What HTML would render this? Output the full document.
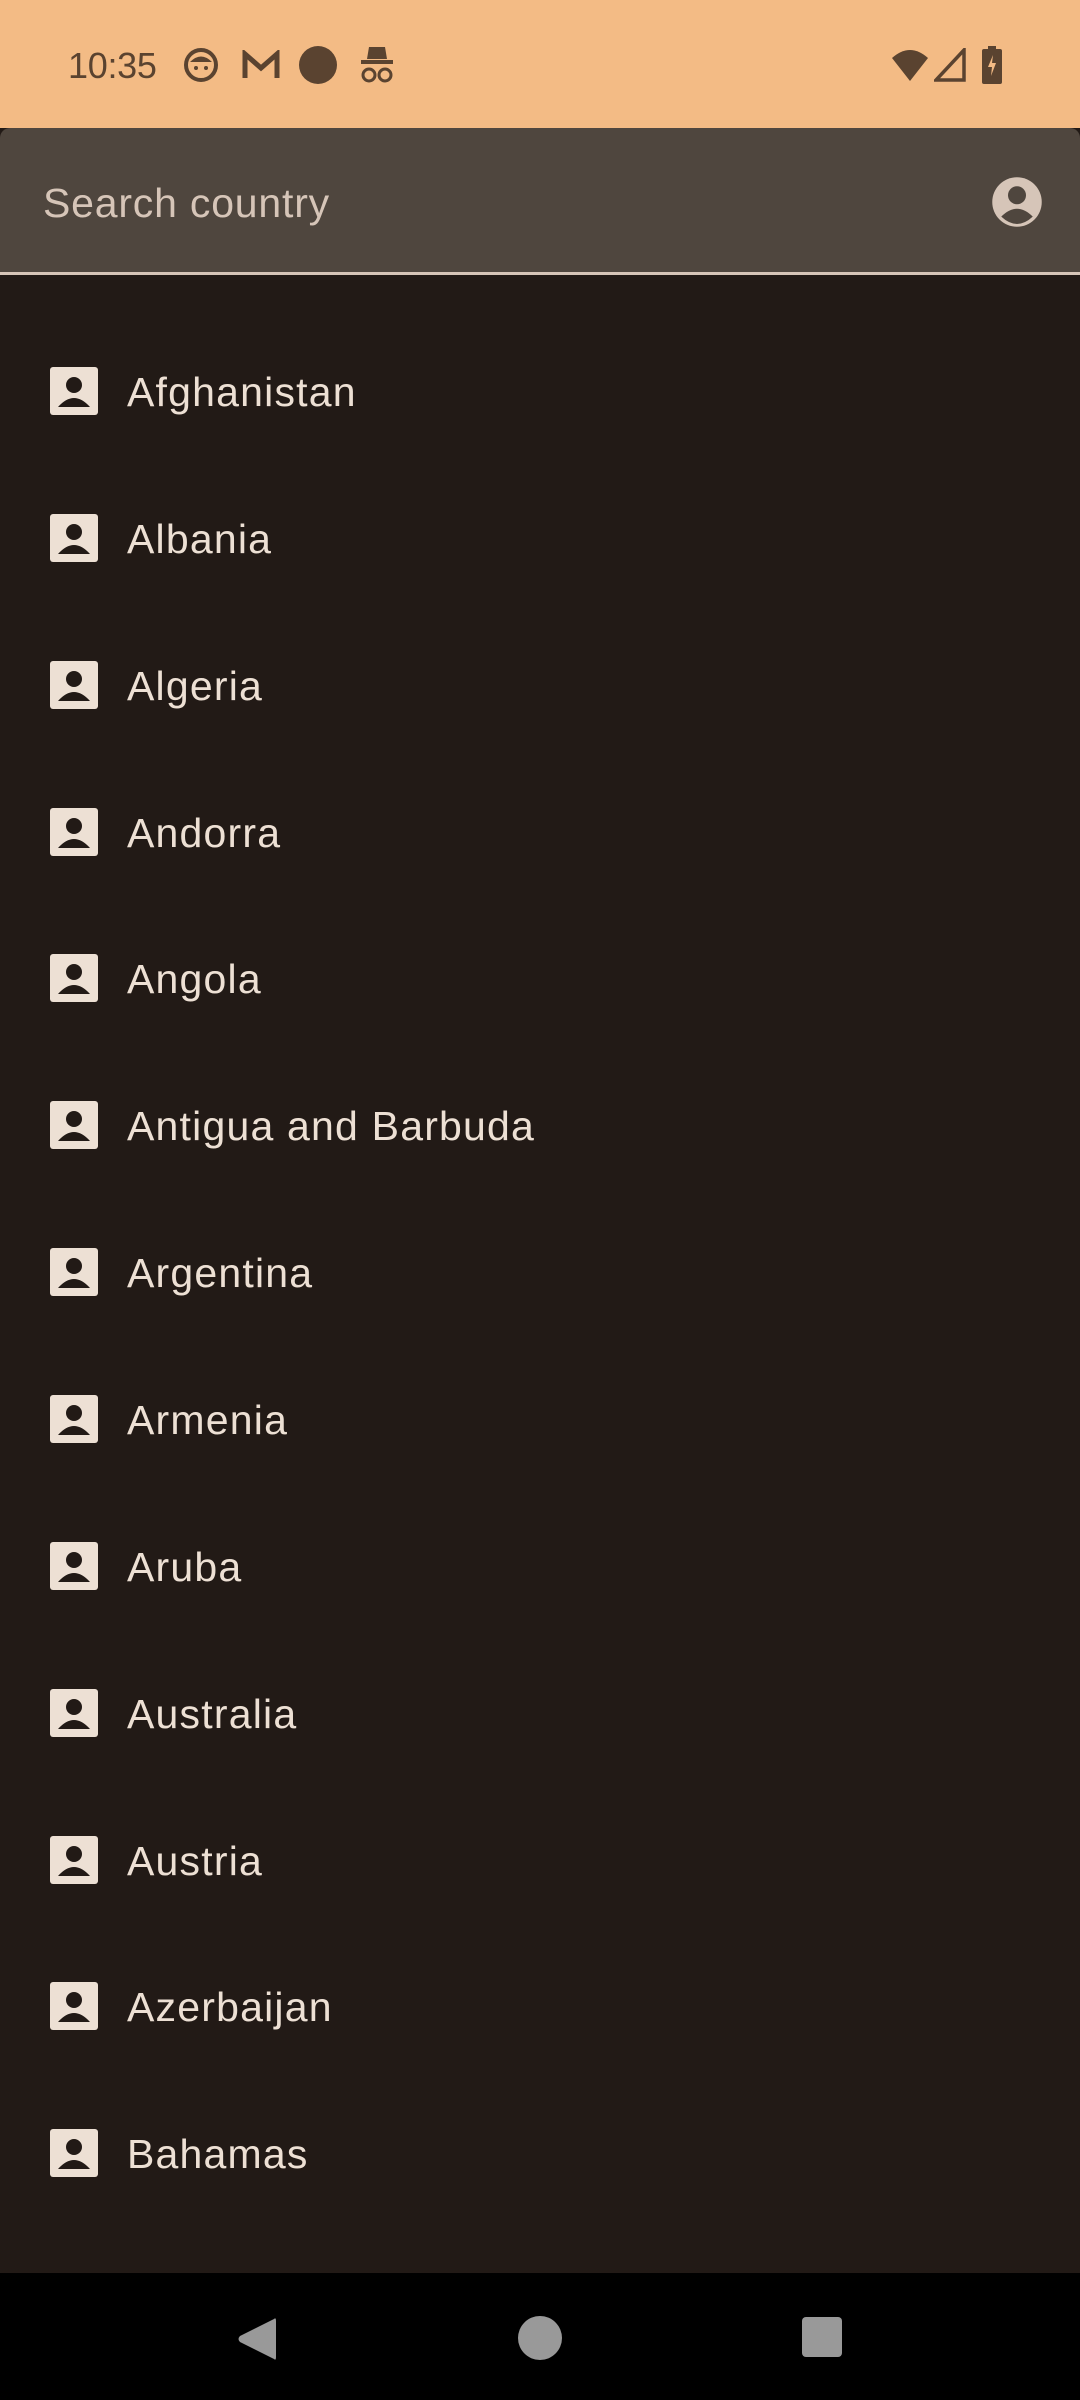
<!DOCTYPE html>
<html><head><meta charset="utf-8"><style>
*{margin:0;padding:0;box-sizing:border-box}
body{width:1080px;height:2400px;background:#221a16;font-family:"Liberation Sans",sans-serif;position:relative;overflow:hidden}
.sb{position:absolute;left:0;top:0;width:1080px;height:128px;background:#f3bb85}
.time{position:absolute;left:68px;top:45px;font-size:36px;color:#5a4330;letter-spacing:-0.3px}
.search{position:absolute;left:0;top:128px;width:1080px;height:144px;background:#4f463e;border-radius:10px 10px 0 0}
.search span{position:absolute;left:43px;top:52px;font-size:41px;color:#d6c5b8;letter-spacing:0.8px}
.div{position:absolute;left:0;top:272px;width:1080px;height:3px;background:#d6c5b8}
.item{position:absolute;left:0;width:1080px;height:60px}
.item svg{position:absolute;left:50px;top:6px}
.item span{position:absolute;left:127px;top:8px;font-size:41px;color:#ede0d4;letter-spacing:1.2px}
.nav{position:absolute;left:0;top:2273px;width:1080px;height:127px;background:#000}
</style></head><body>
<div class="sb">
<div class="time">10:35</div>
<svg style="position:absolute;left:183px;top:47px" width="36" height="36" viewBox="0 0 36 36"><circle cx="18" cy="18" r="15" fill="none" stroke="#5a4330" stroke-width="4"/><path d="M7 15 Q18 4 29 15" fill="#5a4330"/><circle cx="13" cy="21" r="2" fill="#5a4330"/><circle cx="23" cy="21" r="2" fill="#5a4330"/></svg>
<svg style="position:absolute;left:242px;top:50px" width="38" height="30" viewBox="0 0 38 30"><path d="M3 28V4L19 18 35 4V28" fill="none" stroke="#5a4330" stroke-width="5"/></svg>
<svg style="position:absolute;left:298px;top:45px" width="40" height="40"><circle cx="20" cy="20" r="19" fill="#5a4330"/></svg>
<svg style="position:absolute;left:357px;top:45px" width="40" height="40" viewBox="0 0 40 40"><path d="M12 2H28L30 14H10Z" fill="#5a4330"/><rect x="4" y="15" width="32" height="4" fill="#5a4330"/><circle cx="12" cy="30" r="6" fill="none" stroke="#5a4330" stroke-width="3"/><circle cx="28" cy="30" r="6" fill="none" stroke="#5a4330" stroke-width="3"/></svg>
<svg style="position:absolute;left:890px;top:48px" width="40" height="34" viewBox="0 0 40 34"><path d="M2 10 Q20 -6 38 10 L20 33Z" fill="#5a4330"/></svg>
<svg style="position:absolute;left:934px;top:48px" width="32" height="34" viewBox="0 0 32 34"><path d="M30 2V32H2Z" fill="none" stroke="#5a4330" stroke-width="3.5"/></svg>
<svg style="position:absolute;left:982px;top:46px" width="20" height="38" viewBox="0 0 20 38"><rect x="6" y="0" width="8" height="4" fill="#5a4330"/><rect x="0" y="3" width="20" height="35" rx="2" fill="#5a4330"/><path d="M11 9 6 21H10L9 30 14 17H10Z" fill="#f3bb85"/></svg>
</div>
<div class="search"><span>Search country</span>
<svg style="position:absolute;left:990px;top:47px" width="54" height="54" viewBox="0 0 24 24"><circle cx="12" cy="12" r="11" fill="#d6c5b8"/><circle cx="12" cy="9" r="4" fill="#4f463e"/><path d="M5 18.5 Q12 11.5 19 18.5 Q12 25 5 18.5Z" fill="#4f463e"/></svg>
</div>
<div class="div"></div>
<div id="list"></div>
<div class="nav">
<svg style="position:absolute;left:236px;top:42px" width="42" height="48" viewBox="0 0 42 48"><path d="M38 4 Q40 2 40 6 V42 Q40 46 38 44 L4 27 Q1 24 4 21Z" fill="#999"/></svg>
<svg style="position:absolute;left:517px;top:42px" width="46" height="46"><circle cx="23" cy="23" r="22" fill="#999"/></svg>
<svg style="position:absolute;left:802px;top:44px" width="40" height="40"><rect x="0" y="0" width="40" height="40" rx="4" fill="#999"/></svg>
</div>
<script>
var n=["Afghanistan","Albania","Algeria","Andorra","Angola","Antigua and Barbuda","Argentina","Armenia","Aruba","Australia","Austria","Azerbaijan","Bahamas"];
var h="";
for(var i=0;i<n.length;i++){var y=Math.round(361+146.85*i);
h+='<div class="item" style="top:'+y+'px"><svg width="48" height="48" viewBox="0 0 48 48"><rect x="0" y="0" width="48" height="48" rx="3" fill="#ede0d4"/><circle cx="24" cy="18" r="8" fill="#221a16"/><path d="M8 40 Q24 22 40 40Z" fill="#221a16"/></svg><span>'+n[i]+'</span></div>';}
document.getElementById("list").innerHTML=h;
</script>
</body></html>
